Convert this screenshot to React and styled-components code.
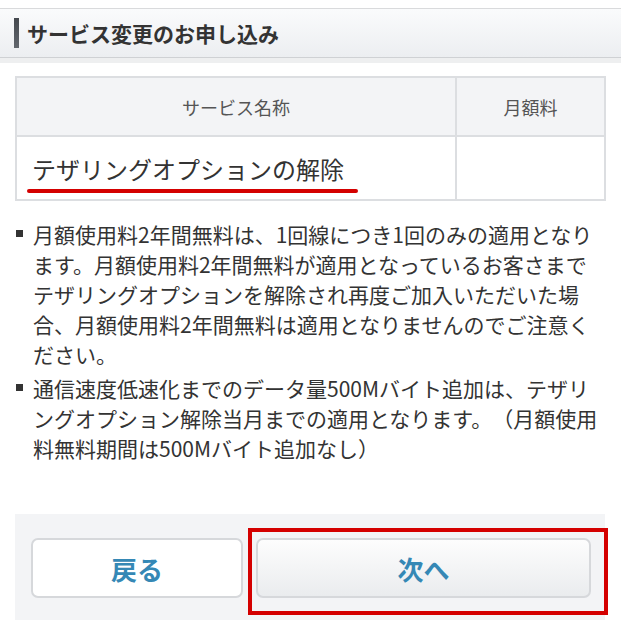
import React from 'react';
import styled, { createGlobalStyle } from 'styled-components';

const GlobalStyle = createGlobalStyle`
  body {
    margin: 0;
    background: #fff;
    font-family: "Noto Sans CJK JP", "Liberation Sans", sans-serif;
    color: #333;
    text-spacing-trim: space-all;
  }
`;

const Page = styled.div`
  width: 621px;
  padding-top: 8px;
`;

const SectionHeader = styled.div`
  height: 48px;
  display: flex;
  align-items: center;
  padding-left: 14px;
  border-top: 1px solid #d9dadc;
  border-bottom: 1px solid #cfd1d4;
  background: linear-gradient(#fafbfc, #eceef1);
  box-shadow: 0 5px 0 #eeeff0;
`;

const AccentBar = styled.span`
  width: 5px;
  height: 30px;
  margin-right: 8px;
  background: linear-gradient(#45494f, #62676e);
`;

const Title = styled.h2`
  margin: 0;
  font-size: 21px;
  font-weight: bold;
  color: #333;
`;

const Table = styled.table`
  margin: 18px 15px 0;
  width: 591px;
  border-collapse: collapse;
  border: 2px solid #dcdee1;
`;

const HeadCell = styled.th`
  height: 57px;
  padding: 0;
  background: #f3f4f6;
  border: 2px solid #dcdee1;
  font-size: 18px;
  font-weight: normal;
  color: #555;
  width: ${p => p.$width || 'auto'};
`;

const BodyCell = styled.td`
  height: 62px;
  padding: 0 0 0 15px;
  border: 2px solid #dcdee1;
  font-size: 24px;
  color: #333;
`;

const Marked = styled.span`
  position: relative;
  display: inline-block;

  &::after {
    content: '';
    position: absolute;
    left: -5px;
    right: -14px;
    bottom: -7px;
    height: 4px;
    border-radius: 2px;
    background: #d40000;
  }
`;

const Notes = styled.ul`
  list-style: none;
  margin: 18px 0 0;
  padding: 0 0 0 33px;
  width: 568px;
`;

const Note = styled.li`
  position: relative;
  font-size: 21px;
  line-height: 30px;
  color: #333;
  margin-bottom: 4px;

  &::before {
    content: '';
    position: absolute;
    left: -17px;
    top: 11px;
    width: 7px;
    height: 7px;
    background: #333;
  }
`;

const ButtonArea = styled.div`
  margin: 51px 16px 0 15px;
  padding: 24px 14px 22px 16px;
  background: #f3f4f6;
  display: grid;
  grid-template-columns: 212px 1fr;
  gap: 13px;
`;

const Button = styled.button`
  width: 100%;
  height: 60px;
  border: 2px solid #d6d8db;
  border-radius: 7px;
  background: ${p => (p.$primary ? 'linear-gradient(#fdfdfd, #eaecee)' : '#fff')};
  font-family: "Noto Sans CJK JP", "Liberation Sans", sans-serif;
  font-size: 26px;
  font-weight: bold;
  color: #3588b5;
  cursor: pointer;
`;

const Highlight = styled.div`
  position: relative;

  &::after {
    content: '';
    position: absolute;
    left: -8px;
    top: -10px;
    right: -17px;
    bottom: -17px;
    border: 4px solid #d40000;
    pointer-events: none;
  }
`;

export default function App() {
  return (
    <Page>
      <GlobalStyle />
      <SectionHeader>
        <AccentBar />
        <Title>サービス変更のお申し込み</Title>
      </SectionHeader>
      <Table>
        <thead>
          <tr>
            <HeadCell $width="438px">サービス名称</HeadCell>
            <HeadCell>月額料</HeadCell>
          </tr>
        </thead>
        <tbody>
          <tr>
            <BodyCell><Marked>テザリングオプションの解除</Marked></BodyCell>
            <BodyCell />
          </tr>
        </tbody>
      </Table>
      <Notes>
        <Note>月額使用料2年間無料は、1回線につき1回のみの適用となります。月額使用料2年間無料が適用となっているお客さまでテザリングオプションを解除され再度ご加入いただいた場合、月額使用料2年間無料は適用となりませんのでご注意ください。</Note>
        <Note>通信速度低速化までのデータ量500Mバイト追加は、テザリングオプション解除当月までの適用となります。（月額使用料無料期間は500Mバイト追加なし）</Note>
      </Notes>
      <ButtonArea>
        <Button>戻る</Button>
        <Highlight>
          <Button $primary>次へ</Button>
        </Highlight>
      </ButtonArea>
    </Page>
  );
}
